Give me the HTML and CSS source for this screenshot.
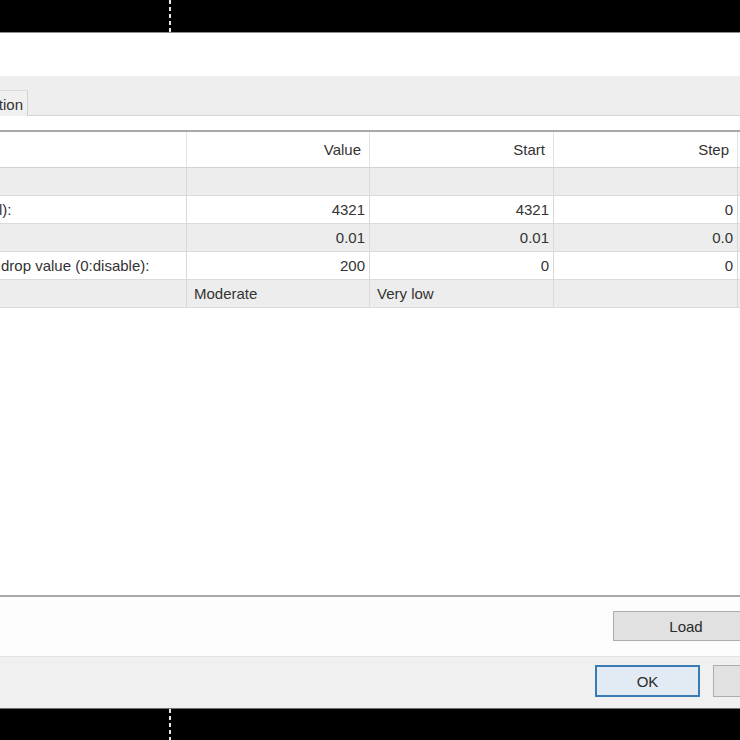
FILE: index.html
```html
<!DOCTYPE html>
<html>
<head>
<meta charset="utf-8">
<link rel="stylesheet" href="styles.css">
</head>
<body>
<div class="screen">
  <div class="bar bar-top"><span class="dash"></span></div>
  <div class="dialog">
    <div class="title-area"></div>
    <div class="tabstrip">
      <div class="tab"><span class="tab-label">tion</span></div>
    </div>
    <div class="panel">
      <div class="listbox">
        <div class="row head">
          <div class="cell c1"></div>
          <div class="cell num">Value</div>
          <div class="cell num">Start</div>
          <div class="cell num">Step</div>
          <div class="cell c5"></div>
        </div>
        <div class="row alt">
          <div class="cell c1"></div>
          <div class="cell"></div>
          <div class="cell"></div>
          <div class="cell"></div>
          <div class="cell c5"></div>
        </div>
        <div class="row">
          <div class="cell c1 cut">l):</div>
          <div class="cell num">4321</div>
          <div class="cell num">4321</div>
          <div class="cell num">0</div>
          <div class="cell c5"></div>
        </div>
        <div class="row alt">
          <div class="cell c1"></div>
          <div class="cell num">0.01</div>
          <div class="cell num">0.01</div>
          <div class="cell num">0.0</div>
          <div class="cell c5"></div>
        </div>
        <div class="row">
          <div class="cell c1 cut2">drop value (0:disable):</div>
          <div class="cell num">200</div>
          <div class="cell num">0</div>
          <div class="cell num">0</div>
          <div class="cell c5"></div>
        </div>
        <div class="row alt">
          <div class="cell c1"></div>
          <div class="cell txt">Moderate</div>
          <div class="cell txt">Very low</div>
          <div class="cell"></div>
          <div class="cell c5"></div>
        </div>
      </div>
      <div class="load-row">
        <button class="btn btn-load">Load</button>
      </div>
    </div>
    <div class="footer">
      <button class="btn btn-ok">OK</button>
      <button class="btn btn-cancel"></button>
    </div>
  </div>
  <div class="bar bar-bottom"><span class="dash"></span></div>
</div>
</body>
</html>
```

FILE: styles.css
```css
html, body {
  margin: 0;
  padding: 0;
  background: #000;
}
body {
  width: 740px;
  height: 740px;
  overflow: hidden;
  font-family: "Liberation Sans", Arial, sans-serif;
  font-size: 15px;
  color: #333333;
}
.screen {
  display: flex;
  flex-direction: column;
  width: 740px;
  height: 740px;
}
.bar {
  background: #000;
  display: flex;
  padding-left: 169px;
  box-sizing: border-box;
}
.bar-top {
  height: 33px;
  border-bottom: 1px solid #8c8c8c;
  flex: none;
}
.bar-bottom {
  height: 32px;
  flex: none;
  border-top: 1px solid #6e6e6e;
}
.dash {
  width: 2px;
  height: 100%;
  background: repeating-linear-gradient(to bottom, #e8e8e8 0 4px, transparent 4px 7px);
}
.dialog {
  flex: 1;
  background: #fff;
  display: flex;
  flex-direction: column;
  width: 900px;
}
.title-area {
  height: 43px;
  background: #fff;
}
.tabstrip {
  height: 40px;
  box-sizing: border-box;
  background: #eeeeee;
  border-bottom: 1px solid #d6d6d6;
  display: flex;
  align-items: flex-end;
}
.tab {
  height: 26px;
  width: 28px;
  box-sizing: border-box;
  background: #f0f0f0;
  border-top: 1px solid #dadada;
  border-right: 1px solid #d0d0d0;
  display: flex;
  align-items: center;
  justify-content: flex-end;
  padding-right: 4px;
  margin-bottom: -1px;
}
.tab-label {
  white-space: nowrap;
  line-height: 1;
  padding-top: 2px;
}
.panel {
  background: #fff;
  padding-top: 14px;
  display: flex;
  flex-direction: column;
}
.listbox {
  height: 467px;
  box-sizing: border-box;
  border-top: 2px solid #a9a9a9;
  border-bottom: 2px solid #a9a9a9;
  background: #fff;
  display: flex;
  flex-direction: column;
}
.row {
  display: grid;
  grid-template-columns: 187px 183px 184px 184px 1fr;
  height: 28px;
  border-bottom: 1px solid #dadada;
  box-sizing: border-box;
  background: #fff;
}
.row.head {
  height: 36px;
  border-bottom: 1px solid #d2d2d2;
}
.row.alt {
  background: #ededed;
}
.cell {
  border-right: 1px solid #d9d9d9;
  display: flex;
  align-items: center;
  white-space: nowrap;
  overflow: hidden;
  padding: 0 4px 0 7px;
  box-sizing: border-box;
}
.head .cell {
  border-right-color: #e3e3e3;
  padding-right: 8px;
}
.num {
  justify-content: flex-end;
}
.cut {
  padding-left: 0;
  text-indent: -1px;
}
.cut2 {
  padding-left: 1px;
}
.c5 {
  border-right: none;
}
.load-row {
  height: 60px;
  background: #fdfdfd;
  border-bottom: 1px solid #e4e4e4;
  display: flex;
  align-items: flex-start;
  padding-left: 613px;
  padding-top: 14px;
  box-sizing: border-box;
}
.btn {
  font-family: "Liberation Sans", Arial, sans-serif;
  font-size: 15px;
  color: #2a2a2a;
  background: #e1e1e1;
  border: 1px solid #adadad;
  box-sizing: border-box;
  padding: 0;
  display: flex;
  align-items: center;
  justify-content: center;
}
.btn-load {
  width: 146px;
  height: 30px;
}
.footer {
  flex: 1;
  background: #f0f0f0;
  display: flex;
  align-items: flex-start;
  gap: 13px;
  padding-left: 595px;
  padding-top: 8px;
  box-sizing: border-box;
}
.btn-ok {
  width: 105px;
  height: 32px;
  border: 2px solid #3a7bb3;
  background: #e2ebf3;
}
.btn-cancel {
  width: 105px;
  height: 32px;
}
```
